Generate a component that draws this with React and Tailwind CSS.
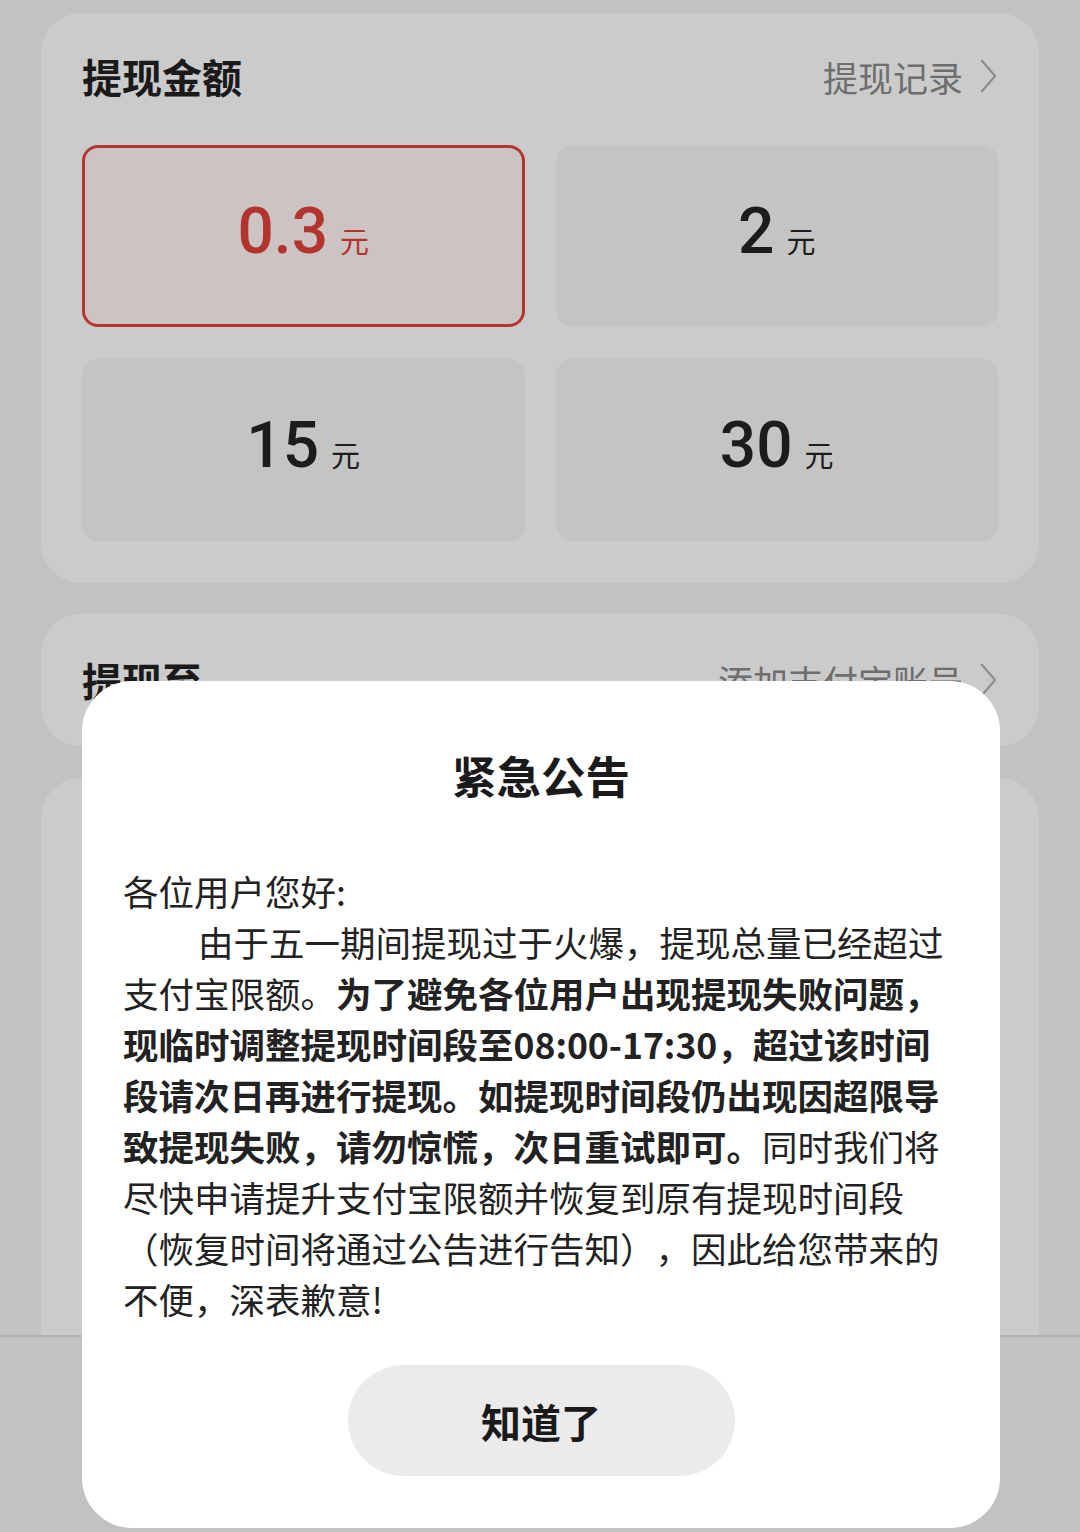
const AMOUNTS = [
  { value: '0.3', active: true },
  { value: '2' },
  { value: '15' },
  { value: '30' },
];

// notice body, one entry per rendered line: [text, bold]
const LINES = [
  [['各位用户您好:', false]],
  [['由于五一期间提现过于火爆，提现总量已经超过', false]],
  [['支付宝限额。', false], ['为了避免各位用户出现提现失败问题，', true]],
  [['现临时调整提现时间段至08:00-17:30，超过该时间', true]],
  [['段请次日再进行提现。如提现时间段仍出现因超限导', true]],
  [['致提现失败，请勿惊慌，次日重试即可。', true], ['同时我们将', false]],
  [['尽快申请提升支付宝限额并恢复到原有提现时间段', false]],
  [['（恢复时间将通过公告进行告知），因此给您带来的', false]],
  [['不便，深表歉意!', false]],
];

function Chevron({ className }) {
  return (
    <svg viewBox="0 0 20 36" className={className} fill="none">
      <path d="M3 2 L17 18 L3 34" stroke="currentColor" strokeWidth="2.2" strokeLinecap="round" strokeLinejoin="round" />
    </svg>
  );
}

function AmountTile({ value, active }) {
  return (
    <div
      className={
        active
          ? 'h-[182px] rounded-[16px] border-[3.5px] border-[#b5362f] bg-[#ccc3c3] flex items-center justify-center'
          : 'h-[182px] rounded-[16px] bg-[#c4c4c4] flex items-center justify-center'
      }
    >
      <div className={active ? 'flex items-baseline gap-[12px] text-[#b3342e] -mt-[8px]' : 'flex items-baseline gap-[12px] text-[#1c1c1c] -mt-[8px]'}>
        <span className="font-['Roboto',sans-serif] font-medium text-[64px] leading-none">{value}</span>
        <span className="text-[29px] leading-none">元</span>
      </div>
    </div>
  );
}

export default function App() {
  return (
    <div className="relative w-[1080px] h-[1532px] overflow-hidden bg-[#c1c2c4] font-['Noto_Sans_CJK_SC','Noto_Sans',sans-serif] [text-spacing-trim:space-all]">
      <div className="flex flex-col h-full">
        <div className="px-[41px] pt-[13px] flex flex-col">
          <section className="h-[570px] rounded-[40px] bg-[#cbcbcb] px-[41px] pt-[39px]">
            <div className="flex items-center justify-between h-[48px]">
              <h2 className="text-[40px] font-bold text-[#1a1a1a] leading-none">提现金额</h2>
              <div className="flex items-center gap-[16px] text-[#6e6e6e]">
                <span className="text-[35px] leading-none">提现记录</span>
                <Chevron className="w-[19px] h-[36px] text-[#8c8c8c]" />
              </div>
            </div>
            <div className="grid grid-cols-2 gap-x-[31px] gap-y-[32px] mt-[45px]">
              {AMOUNTS.map((a) => (
                <AmountTile key={a.value} {...a} />
              ))}
            </div>
          </section>

          <section className="h-[132px] mt-[31px] rounded-[40px] bg-[#cbcbcb] px-[41px] flex items-center justify-between">
            <h2 className="text-[40px] font-bold text-[#1a1a1a] leading-none">提现至</h2>
            <div className="flex items-center gap-[16px] text-[#6e6e6e]">
              <span className="text-[35px] leading-none">添加支付宝账号</span>
              <Chevron className="w-[19px] h-[36px] text-[#8c8c8c]" />
            </div>
          </section>

          <section className="h-[557px] mt-[32px] rounded-t-[40px] bg-[#cbcbcb]" />
        </div>
        <div className="flex-1 border-t-2 border-[#b2b2b4] bg-[#c1c2c4]" />
      </div>

      {/* notice dialog */}
      <div className="absolute left-[82px] top-[681px] w-[918px] h-[847px] rounded-[50px] bg-white flex flex-col items-center pt-[68px]">
        <h3 className="text-[44.5px] font-bold text-[#1a1a1a] leading-[52px]">紧急公告</h3>
        <div className="self-stretch px-[41px] mt-[64px] text-[35.5px] leading-[51px] text-[#222]">
          {LINES.map((parts, i) => (
            <div key={i} className={i === 1 ? 'whitespace-nowrap pl-[75px]' : 'whitespace-nowrap'}>
              {parts.map(([t, b], j) => (
                <span key={j} className={b ? 'font-bold' : ''}>{t}</span>
              ))}
            </div>
          ))}
        </div>
        <button
          type="button"
          className="mt-[41px] w-[387px] h-[111px] rounded-full bg-[#ebebeb] text-[40px] font-bold text-[#1a1a1a] leading-none"
        >
          知道了
        </button>
      </div>
    </div>
  );
}
